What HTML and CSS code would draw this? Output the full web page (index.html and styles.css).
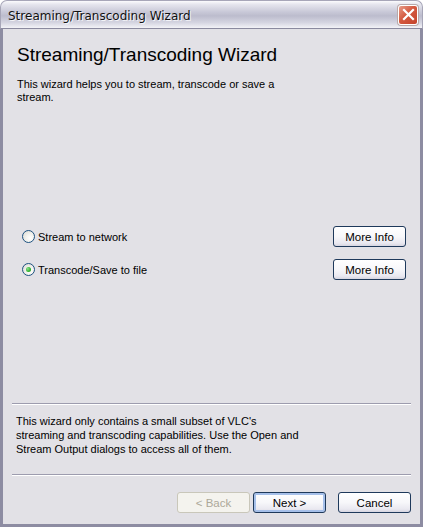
FILE: index.html
```html
<!DOCTYPE html>
<html lang="en">
<head>
  <meta charset="UTF-8" />
  <title>Streaming/Transcoding Wizard</title>
  <link rel="stylesheet" href="styles.css">
</head>
<body>
  <div class="window">
    <div class="titlebar">
      <span class="title">Streaming/Transcoding Wizard</span>
      <span class="close">
        <svg width="13" height="13" viewBox="0 0 13 13">
          <path d="M2 2 L11 11 M11 2 L2 11" stroke="#fff" stroke-width="2.2" stroke-linecap="square" />
        </svg>
      </span>
    </div>

    <div class="content">
      <div class="page">
        <h1>Streaming/Transcoding Wizard</h1>
        <p class="intro">This wizard helps you to stream, transcode or save a stream.</p>

        <div class="options">
          <div class="option">
            <label class="radio"><span class="dot"></span>Stream to network</label>
            <button class="btn">More Info</button>
          </div>
          <div class="option">
            <label class="radio"><span class="dot checked"></span>Transcode/Save to file</label>
            <button class="btn">More Info</button>
          </div>
        </div>
      </div>

      <hr>
      <p class="note">This wizard only contains a small subset of VLC's<br>streaming and transcoding capabilities. Use the Open and<br>Stream Output dialogs to access all of them.</p>
      <hr>

      <div class="actions">
        <button class="btn" disabled>&lt; Back</button>
        <button class="btn default">Next &gt;</button>
        <button class="btn cancel">Cancel</button>
      </div>
    </div>
  </div>
</body>
</html>
```

FILE: styles.css
```css
html, body {
  margin: 0;
  height: 100%;
}
body {
  font-family: "Liberation Sans", Arial, sans-serif;
  font-size: 11px;
  color: #000;
  background: #fff;
}
.window {
  width: 423px;
  height: 527px;
  display: flex;
  flex-direction: column;
  box-sizing: border-box;
}
.titlebar {
  height: 29px;
  flex: none;
  display: flex;
  align-items: center;
  justify-content: space-between;
  padding: 0 4px 0 7px;
  box-sizing: border-box;
  border-radius: 7px 7px 0 0;
  border: 1px solid #a7a6b8;
  border-bottom: 1px solid #8b8a9f;
  background: linear-gradient(#fbfbfd 0%, #e6e6ee 12%, #c9c9d8 40%, #bcbccd 55%, #d5d5e1 80%, #f3f3f7 100%);
}
.title {
  font-family: "DejaVu Sans", Verdana, sans-serif;
  font-size: 12px;
  color: #111;
  text-shadow: 1px 1px 0 #f4f4f8;
  margin-top: 3px;
}
.close {
  width: 20px;
  height: 20px;
  border-radius: 3px;
  border: 1px solid #fff;
  box-sizing: border-box;
  display: flex;
  align-items: center;
  justify-content: center;
  background: linear-gradient(135deg, #e79c88 0%, #d4593f 45%, #c4432c 100%);
  box-shadow: 0 0 0 1px #b8a9a9;
}
.content {
  flex: 1;
  display: flex;
  flex-direction: column;
  background: #e2e1e6;
  border: 3px solid #8d8ca2;
  border-top: none;
  padding: 0 9px 11px 9px;
  box-sizing: border-box;
}
.page {
  flex: 1;
  padding: 0 5px;
}
h1 {
  font-family: "Liberation Sans", Arial, sans-serif;
  font-size: 19px;
  font-weight: normal;
  margin: 15px 0 0 0;
}
.intro {
  margin: 12px 0 0 0;
  width: 270px;
  line-height: 13px;
}
.options {
  margin-top: 122px;
  display: flex;
  flex-direction: column;
  gap: 12px;
  padding: 0 0 0 5px;
}
.option {
  display: flex;
  align-items: center;
  justify-content: space-between;
}
.radio {
  display: flex;
  align-items: center;
  gap: 3px;
}
.dot {
  width: 13px;
  height: 13px;
  border-radius: 50%;
  border: 1px solid #1c5180;
  box-sizing: border-box;
  background: radial-gradient(circle at 65% 65%, #ffffff 0%, #f2f2ee 40%, #d9d8d0 100%);
  display: flex;
  align-items: center;
  justify-content: center;
}
.dot.checked::after {
  content: "";
  width: 5px;
  height: 5px;
  border-radius: 50%;
  background: radial-gradient(circle at 35% 35%, #8fe28f 0%, #2eb32e 60%, #1b8b1b 100%);
}
.btn {
  font-family: "Liberation Sans", Arial, sans-serif;
  font-size: 11.5px;
  width: 73px;
  height: 21px;
  padding: 0;
  color: #000;
  border: 1px solid #1e395b;
  border-radius: 3px;
  background: linear-gradient(#ffffff 0%, #f7f7fa 50%, #e9e8f0 85%, #d6d5e0 100%);
}
.btn:disabled {
  color: #aca899;
  border-color: #c9c7ba;
  background: #f4f3ee;
}
.btn.default {
  box-shadow: inset 0 0 0 2px #a6c0ea;
}
hr {
  border: none;
  border-top: 1px solid #9d9cae;
  border-bottom: 1px solid #fff;
  margin: 0;
}
.note {
  margin: 9px 4px 18px 4px;
  line-height: 14px;
}
.actions {
  display: flex;
  justify-content: flex-end;
  gap: 3px;
  margin-top: 16px;
}
.btn.cancel {
  margin-left: 9px;
}
```
